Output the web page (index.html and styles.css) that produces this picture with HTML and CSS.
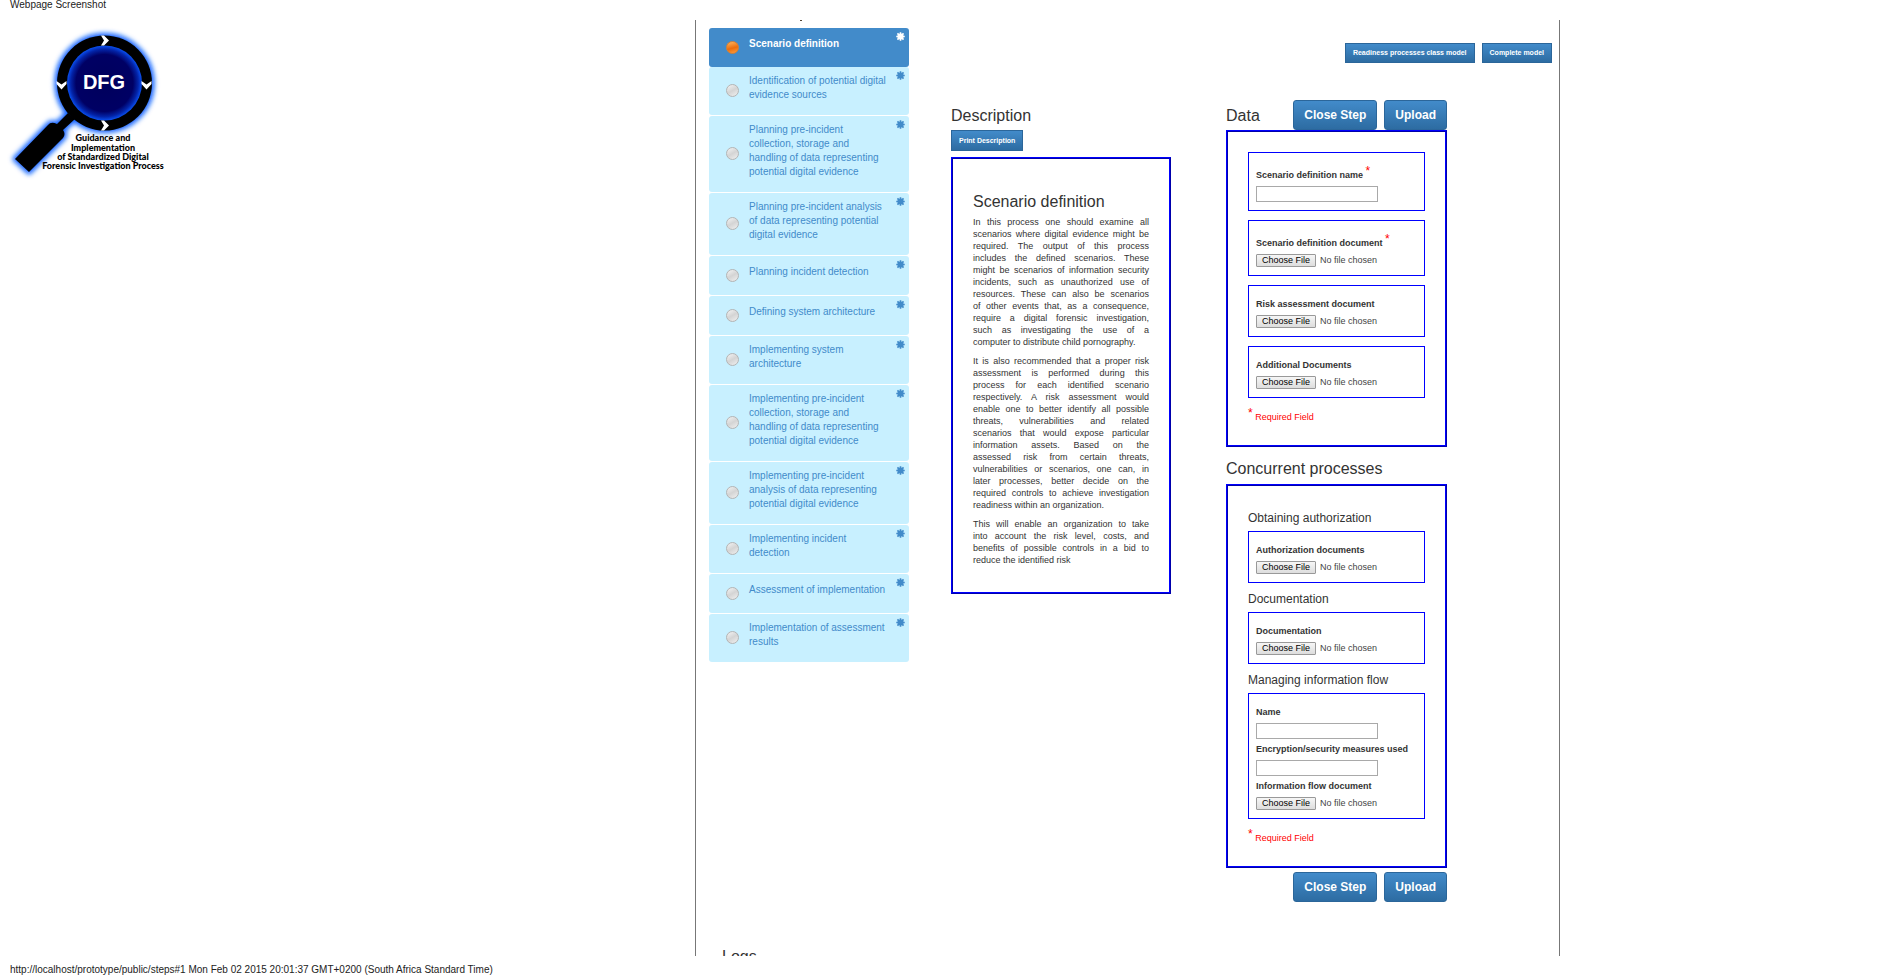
FILE: index.html
```html
<!DOCTYPE html>
<html lang="en">
<head>
<meta charset="utf-8">
<title>Webpage Screenshot</title>
<link rel="stylesheet" href="styles.css">
</head>
<body>
<svg width="0" height="0" class="defs" aria-hidden="true">
  <symbol id="burst" viewBox="0 0 10 10">
    <path d="M5 .3V9.7M.3 5H9.7M1.6 1.6L8.4 8.4M8.4 1.6L1.6 8.4" stroke="currentColor" stroke-width="1.8"/>
    <circle cx="5" cy="5" r="3.4" fill="currentColor"/>
  </symbol>
</svg>
<header class="caption">Webpage Screenshot</header>
<main class="page">
  <div class="brand">
    <svg class="logo" viewBox="0 0 180 170" role="img" aria-label="DFG">
      <defs>
        <filter id="glow" x="-20%" y="-20%" width="140%" height="140%"><feGaussianBlur stdDeviation="2.6"/></filter>
        <radialGradient id="lens"><stop offset="0" stop-color="#00005c"/><stop offset=".76" stop-color="#000064"/><stop offset=".9" stop-color="#0324a8"/><stop offset="1" stop-color="#0a50f0"/></radialGradient>
      </defs>
      <g filter="url(#glow)" fill="#1060ff" stroke="#1060ff" stroke-width="5" stroke-linejoin="round">
        <circle cx="104.500" cy="63" r="47.500"/>
        <path d="M68 93L57 104Q51 101 48 105L15 139L29 152L63 118Q66 114 63 110L75 99Z"/>
      </g>
      <path d="M68 93L57 104Q51 101 48 105L15 139L29 152L63 118Q66 114 63 110L75 99Z"/>
      <circle cx="104.500" cy="63" r="47.500"/>
      <circle cx="104.500" cy="63" r="37.500" fill="url(#lens)"/>
      <path d="M101 15.500h3l5 5-5 5h-3l3-5zM101 100.500h3l5 5-5 5h-3l3-5zM56.500 61v3l5 5.500 5-5.500v-3l-5 3.500zM141.500 61v3l5 5.500 5-5.500v-3l-5 3.500z" fill="#fff"/>
      <text x="104" y="69" class="logo-name">DFG</text>
      <g class="logo-text">
        <text x="103" y="121">Guidance and</text>
        <text x="103" y="131">Implementation</text>
        <text x="103" y="140">of Standardized Digital</text>
        <text x="103" y="149">Forensic Investigation Process</text>
      </g>
    </svg>
  </div>
  <div class="container">
    <nav class="steps">
      <a href="#1" class="step single active"><span class="dot"></span><span>Scenario definition</span><svg class="burst"><use href="#burst"/></svg></a>
      <a href="#2" class="step"><span class="dot"></span><span>Identification of potential digital<br>evidence sources</span><svg class="burst"><use href="#burst"/></svg></a>
      <a href="#3" class="step"><span class="dot"></span><span>Planning pre-incident<br>collection, storage and<br>handling of data representing<br>potential digital evidence</span><svg class="burst"><use href="#burst"/></svg></a>
      <a href="#4" class="step"><span class="dot"></span><span>Planning pre-incident analysis<br>of data representing potential<br>digital evidence</span><svg class="burst"><use href="#burst"/></svg></a>
      <a href="#5" class="step single"><span class="dot"></span><span>Planning incident detection</span><svg class="burst"><use href="#burst"/></svg></a>
      <a href="#6" class="step single"><span class="dot"></span><span>Defining system architecture</span><svg class="burst"><use href="#burst"/></svg></a>
      <a href="#7" class="step"><span class="dot"></span><span>Implementing system<br>architecture</span><svg class="burst"><use href="#burst"/></svg></a>
      <a href="#8" class="step"><span class="dot"></span><span>Implementing pre-incident<br>collection, storage and<br>handling of data representing<br>potential digital evidence</span><svg class="burst"><use href="#burst"/></svg></a>
      <a href="#9" class="step"><span class="dot"></span><span>Implementing pre-incident<br>analysis of data representing<br>potential digital evidence</span><svg class="burst"><use href="#burst"/></svg></a>
      <a href="#10" class="step"><span class="dot"></span><span>Implementing incident<br>detection</span><svg class="burst"><use href="#burst"/></svg></a>
      <a href="#11" class="step single"><span class="dot"></span><span>Assessment of implementation</span><svg class="burst"><use href="#burst"/></svg></a>
      <a href="#12" class="step"><span class="dot"></span><span>Implementation of assessment<br>results</span><svg class="burst"><use href="#burst"/></svg></a>
    </nav>
    <div class="models">
      <button class="btn small">Readiness processes class model</button>
      <button class="btn small">Complete model</button>
    </div>
    <section class="description">
      <h2>Description</h2>
      <button class="btn small print">Print Description</button>
      <div class="panel prose">
        <h2>Scenario definition</h2>
        <p>In this process one should examine all<br>scenarios where digital evidence might be<br>required. The output of this process<br>includes the defined scenarios. These<br>might be scenarios of information security<br>incidents, such as unauthorized use of<br>resources. These can also be scenarios<br>of other events that, as a consequence,<br>require a digital forensic investigation,<br>such as investigating the use of a
        <span class="last">computer to distribute child pornography.</span></p>
        <p>It is also recommended that a proper risk<br>assessment is performed during this<br>process for each identified scenario<br>respectively. A risk assessment would<br>enable one to better identify all possible<br>threats, vulnerabilities and related<br>scenarios that would expose particular<br>information assets. Based on the<br>assessed risk from certain threats,<br>vulnerabilities or scenarios, one can, in<br>later processes, better decide on the<br>required controls to achieve investigation
        <span class="last">readiness within an organization.</span></p>
        <p>This will enable an organization to take<br>into account the risk level, costs, and<br>benefits of possible controls in a bid to
        <span class="last">reduce the identified risk</span></p>
      </div>
    </section>
    <form class="data">
      <div class="data-head">
        <h2>Data</h2>
        <div class="actions"><button type="button" class="btn">Close Step</button><button type="button" class="btn">Upload</button></div>
      </div>
      <div class="panel">
        <div class="group">
          <label for="sname">Scenario definition name <sup>*</sup></label>
          <input type="text" id="sname">
        </div>
        <div class="group">
          <label for="sdoc">Scenario definition document <sup>*</sup></label>
          <input type="file" id="sdoc">
        </div>
        <div class="group">
          <label for="risk">Risk assessment document</label>
          <input type="file" id="risk">
        </div>
        <div class="group">
          <label for="add">Additional Documents</label>
          <input type="file" id="add">
        </div>
        <p class="required"><sup>*</sup> Required Field</p>
      </div>
      <h2 class="concurrent">Concurrent processes</h2>
      <div class="panel processes">
        <h3>Obtaining authorization</h3>
        <div class="group">
          <label for="auth">Authorization documents</label>
          <input type="file" id="auth">
        </div>
        <h3>Documentation</h3>
        <div class="group">
          <label for="docu">Documentation</label>
          <input type="file" id="docu">
        </div>
        <h3>Managing information flow</h3>
        <div class="group">
          <label for="name">Name</label>
          <input type="text" id="name">
          <label for="enc">Encryption/security measures used</label>
          <input type="text" id="enc">
          <label for="flow">Information flow document</label>
          <input type="file" id="flow">
        </div>
        <p class="required"><sup>*</sup> Required Field</p>
      </div>
      <div class="actions bottom"><button type="button" class="btn">Close Step</button><button type="button" class="btn">Upload</button></div>
    </form>
    <h2 class="logs">Logs</h2>
  </div>
</main>
<footer class="caption foot">http://localhost/prototype/public/steps#1 Mon Feb 02 2015 20:01:37 GMT+0200 (South Africa Standard Time)</footer>
</body>
</html>
```
FILE: styles.css
```css
* { box-sizing: border-box; }

body {
  margin: 0;
  height: 100vh;
  display: flex;
  flex-direction: column;
  overflow: hidden;
  background: #fff;
  color: #333;
  font-family: "Liberation Sans", Arial, sans-serif;
  font-size: 9px;
  line-height: 12px;
}

h2, h3, p { margin: 0; font-weight: 400; }
h2 { font-size: 16px; line-height: 20px; }
h3 { font-size: 12px; line-height: 14px; }

.defs { position: absolute; }

.caption {
  flex: none;
  height: 20px;
  padding: 0 10px;
  color: #222;
  font-size: 10px;
  line-height: 10px;
}

.foot { padding-top: 9px; height: 19px; }

.page {
  flex: 1;
  min-height: 0;
  overflow: hidden;
  display: grid;
  grid-template-columns: 695fr 865fr 342fr;
}

.logo { display: block; width: 180px; height: 170px; }
.logo-name { fill: #fff; font: 700 20px "Liberation Sans", sans-serif; text-anchor: middle; }
.logo-text { font: 900 9px Lato, sans-serif; text-anchor: middle; }

.container {
  display: grid;
  grid-template-columns: 200fr 42fr 220fr 55fr 221fr 105fr;
  grid-template-rows: 80px auto 1fr;
  border: solid #777;
  border-width: 0 1px;
  padding: 0 7px 0 13px;
}

.steps {
  position: relative;
  grid-area: 1 / 1 / 3 / 2;
  padding-top: 8px;
}

/* tail of the heading scrolled out of view */
.steps::before {
  content: "";
  position: absolute;
  top: 0;
  left: 91px;
  width: 2px;
  height: 1px;
  background: #543;
}

.step {
  position: relative;
  display: grid;
  grid-template-columns: 40px 1fr;
  min-height: 39px;
  margin-bottom: 1px;
  padding: 7px 12px 13px 0;
  border-radius: 3px;
  background: #c8f0ff;
  color: #428bca;
  font-size: 10px;
  line-height: 14px;
  text-decoration: none;
}

.step.single { padding-top: 9px; }
.step.active { margin-bottom: 0; background: #428bca; color: #fff; font-weight: 700; }

.dot {
  position: absolute;
  left: 17px;
  top: 50%;
  width: 13px;
  height: 13px;
  margin-top: -7px;
  border: 1px solid #b4b4b4;
  border-radius: 50%;
  background: linear-gradient(150deg, #f4f4f4, #d4d4d4 50%, #f0f0f0);
}

.active .dot { border-color: #d98032; background: linear-gradient(165deg, #ffb860, #ec6c0c 55%, #ffa040); }
.step > span:nth-child(2) { grid-column: 2; white-space: nowrap; }
.burst { position: absolute; top: 4px; right: 4px; width: 9px; height: 9px; }

.btn {
  height: 30px;
  border: 1px solid #2b669a;
  border-radius: 3px;
  padding: 0 10px;
  background: linear-gradient(#428bca, #2d6ca2);
  color: #fff;
  font: 700 12px/16px "Liberation Sans", Arial, sans-serif;
}

.btn.small { height: 20px; padding: 0 7px; border-radius: 0; font-size: 7px; line-height: 10px; }

.models {
  grid-area: 1 / 2 / 2 / 7;
  display: flex;
  justify-content: flex-end;
  align-items: flex-start;
  gap: 7px;
  padding-top: 23px;
}

.description { grid-area: 2 / 3; margin-top: 6px; }
.description .print { display: block; height: 21px; margin: 4px 0 6px; }

.panel { border: 2px ridge #00f; padding: 20px 20px 22px; }
.panel.prose { padding: 33px 20px 19px; text-align: justify; text-align-last: justify; }
.prose h2 { margin-bottom: 4px; text-align-last: left; }
.prose p { margin-bottom: 7px; }
.last { display: block; text-align-last: left; }

.data { grid-area: 2 / 5; }
.data-head { display: flex; justify-content: space-between; align-items: center; }
.data-head h2 { padding-top: 2px; }
.actions { display: flex; justify-content: flex-end; gap: 7px; }
.bottom { margin-top: 4px; }

.group {
  border: 1px solid #00f;
  padding: 12px 7px 6px;
  margin-bottom: 9px;
}

.group label { display: block; font-weight: 700; line-height: 12px; margin-bottom: 5px; white-space: nowrap; }
sup { color: #f00; font-size: 12px; font-weight: 400; line-height: 12px; vertical-align: 3px; }

input { display: block; font: 9px/12px "Liberation Sans", Arial, sans-serif; color: #444; }
input[type="text"] { width: 122px; height: 16px; border: 1px solid #a9a9a9; padding: 0 2px; background: #fff; margin-bottom: 4px; }
input[type="text"]:last-child { margin-bottom: 2px; }
input[type="file"] { width: 100%; height: 15px; }

input::file-selector-button {
  width: 60px;
  height: 13px;
  margin: 0 4px 0 0;
  padding: 0;
  border: 1px solid #999;
  border-radius: 1px;
  background: linear-gradient(#f6f6f6, #ddd);
  color: #000;
  font: 9px/11px "Liberation Sans", Arial, sans-serif;
}

.required { color: #f00; }
.concurrent { margin: 12px 0 5px; }
.panel.processes { padding-top: 25px; }
.panel h3 { margin-bottom: 6px; }

.logs { grid-area: 3 / 1; align-self: end; height: 9px; padding-left: 13px; }
```
